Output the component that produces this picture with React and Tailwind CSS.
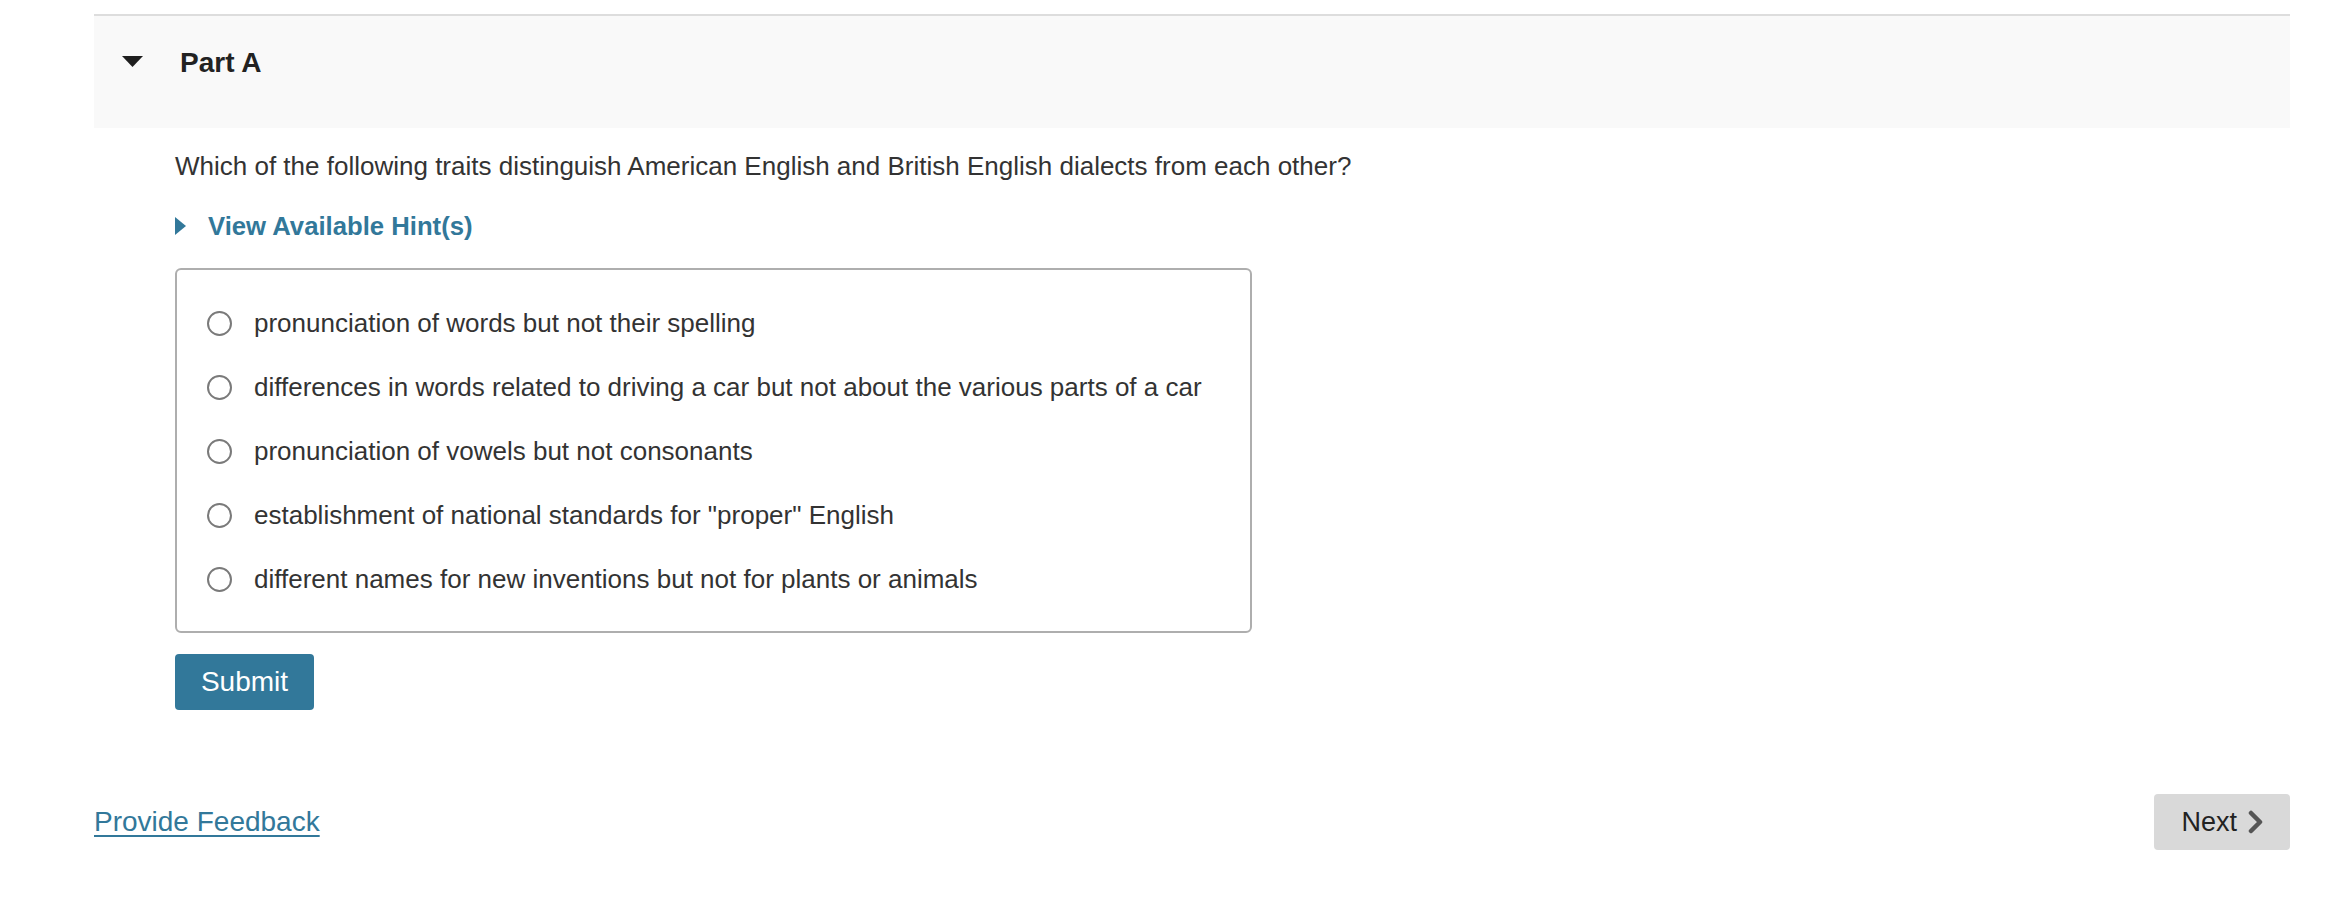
export default function App() {
  const options = [
    "pronunciation of words but not their spelling",
    "differences in words related to driving a car but not about the various parts of a car",
    "pronunciation of vowels but not consonants",
    'establishment of national standards for "proper" English',
    "different names for new inventions but not for plants or animals",
  ];
  return (
    <div
      className="min-h-screen bg-white pt-[14px] pl-[94px]"
      style={{ fontFamily: '"Liberation Sans", Arial, Helvetica, sans-serif' }}
    >
      <div className="w-[2196px]">
        <div className="h-[114px] border-t-2 border-[#dddddd] bg-[#f9f9f9] pt-[31px] pl-[28px]">
          <div className="flex h-[32px] items-center">
            <svg width="21" height="11" viewBox="0 0 21 11" className="mb-[3px]">
              <polygon points="0,0 21,0 10.5,11" fill="#1f1f1f" />
            </svg>
            <span className="ml-[37px] text-[28px] font-bold leading-[32px] text-[#222222]">Part A</span>
          </div>
        </div>

        <div className="pl-[81px]">
          <p className="mt-[23px] text-[26px] leading-[30px] text-[#333333]">
            Which of the following traits distinguish American English and British English dialects from each other?
          </p>

          <div className="mt-[30px] flex h-[30px] items-center">
            <svg width="11" height="18" viewBox="0 0 11 18">
              <polygon points="0,0 11,9 0,18" fill="#32789a" />
            </svg>
            <span className="ml-[22px] text-[25.7px] font-bold leading-[30px] text-[#32789a]">View Available Hint(s)</span>
          </div>

          <div className="mt-[27px] w-[1077px] rounded-[6px] border-2 border-[#aeaeae] pt-[21px] pb-[20px]">
            {options.map((o) => (
              <div key={o} className="flex h-[64px] items-center pl-[30px]">
                <span className="h-[25px] w-[25px] shrink-0 rounded-full border-2 border-[#7a7a7a] bg-white" />
                <span className="ml-[22px] text-[26px] leading-[30px] text-[#333333]">{o}</span>
              </div>
            ))}
          </div>

          <button className="mt-[21px] flex h-[56px] w-[139px] items-center justify-center rounded-[4px] bg-[#32789a] text-[28px] leading-[32px] text-white">
            Submit
          </button>
        </div>

        <div className="mt-[84px] flex items-center justify-between">
          <a href="#" className="text-[28px] leading-[32px] text-[#32789a] underline underline-offset-[4px] decoration-[2px]">
            Provide Feedback
          </a>
          <button className="flex h-[56px] items-center rounded-[4px] bg-[#d9d9d9] px-[27px] text-[27px] leading-[32px] text-[#222222]">
            <span>Next</span>
            <svg width="15" height="24" viewBox="0 0 15 24" className="ml-[11px]">
              <polyline points="3,3 12,12 3,21" fill="none" stroke="#555555" strokeWidth="4.5" strokeLinecap="round" strokeLinejoin="round" />
            </svg>
          </button>
        </div>
      </div>
    </div>
  );
}
